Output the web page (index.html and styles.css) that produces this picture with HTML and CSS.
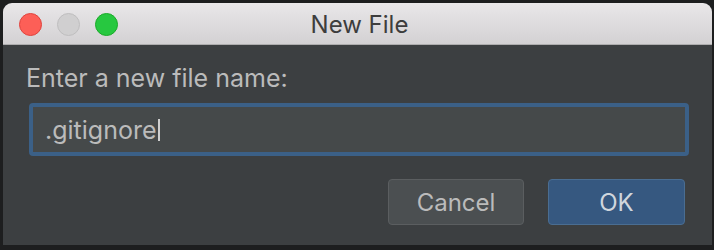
FILE: index.html
```html
<!DOCTYPE html>
<html>
<head>
<meta charset="utf-8">
<link rel="stylesheet" href="styles.css">
</head>
<body>
<div class="window">
  <div class="titlebar">
    <div class="lights">
      <span class="light red"></span>
      <span class="light gray"></span>
      <span class="light green"></span>
    </div>
    <div class="title">New File</div>
  </div>
  <div class="content">
    <div class="label">Enter a new file name:</div>
    <div class="input"><span class="value">.gitignore</span><span class="caret"></span></div>
    <div class="buttons">
      <button class="btn cancel">Cancel</button>
      <button class="btn ok">OK</button>
    </div>
  </div>
</div>
</body>
</html>
```
FILE: styles.css
```css
html, body {
  margin: 0;
  padding: 0;
  background: #1d1e1f;
  width: 714px;
  height: 250px;
  overflow: hidden;
}
.window {
  margin: 3px 2px 0 3px;
  height: 242px;
  background: #3c3f41;
  border-radius: 9px 9px 0 0;
  overflow: hidden;
  display: flex;
  flex-direction: column;
  font-family: Inter, "Noto Sans", sans-serif;
}
.titlebar {
  height: 41px;
  flex: none;
  background: linear-gradient(#e9e7e9, #d3d1d3);
  border-bottom: 1px solid #aeadae;
  display: flex;
  align-items: center;
  position: relative;
}
.lights {
  display: flex;
  gap: 15px;
  padding-left: 16px;
  padding-top: 1px;
}
.light {
  width: 23px;
  height: 23px;
  border-radius: 50%;
  box-sizing: border-box;
}
.red { background: #fd5f57; border: 1px solid #e0443e; }
.gray { background: #d0cfd0; border: 1px solid #bfbebf; }
.green { background: #27c840; border: 1px solid #1aab29; }
.title {
  position: absolute;
  left: 0;
  right: 0;
  top: 0;
  bottom: 0;
  display: flex;
  align-items: center;
  justify-content: center;
  font-size: 24px;
  color: #3d3d3d;
  padding-left: 4px;
  padding-top: 1px;
}
.content {
  flex: 1;
  display: flex;
  flex-direction: column;
  padding: 18px 23px 0 23px;
}
.label {
  font-size: 25px;
  line-height: 30px;
  color: #bbbbbb;
}
.input {
  margin: 10px 0 0 3px;
  height: 53px;
  box-sizing: border-box;
  border: 4px solid #3b6087;
  border-radius: 4px;
  background: #45494a;
  display: flex;
  align-items: center;
  padding-left: 12px;
  font-size: 25px;
  color: #bbbbbb;
}
.caret {
  width: 2px;
  height: 22px;
  background: #cfcfcf;
  margin-left: 1px;
}
.buttons {
  margin-top: 23px;
  display: flex;
  justify-content: flex-end;
  gap: 24px;
  padding-right: 4px;
}
.btn {
  height: 46px;
  width: 137px;
  box-sizing: border-box;
  border-radius: 4px;
  font-family: Inter, "Noto Sans", sans-serif;
  font-size: 24px;
  color: #bbbbbb;
  padding: 0;
}
.cancel {
  width: 136px;
  background: #4b4f51;
  border: 1px solid #5b5e60;
}
.ok {
  background: #365880;
  border: 1px solid #4a6d91;
  color: #d0d6dd;
}
```
